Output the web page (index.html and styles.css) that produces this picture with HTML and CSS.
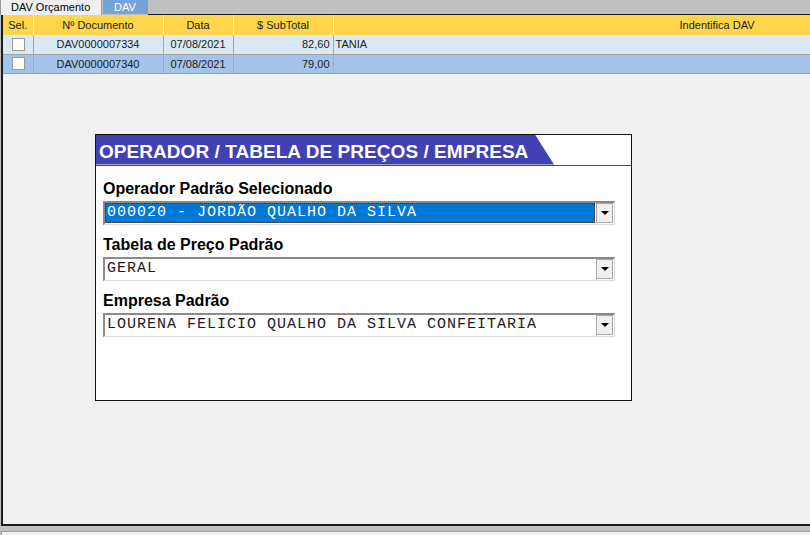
FILE: index.html
```html
<!DOCTYPE html>
<html lang="pt-BR">
<head>
<meta charset="utf-8">
<title>DAV</title>
<link rel="stylesheet" href="styles.css">
</head>
<body>
<div class="tabbar">
  <div class="tab tab-active">DAV Orçamento</div>
  <div class="tab tab-blue">DAV</div>
  <div class="tab-fill"></div>
</div>
<div class="panel">
  <div class="grid-wrap">
    <table class="grid">
      <colgroup>
        <col class="c-sel"><col class="c-doc"><col class="c-data"><col class="c-sub"><col class="c-id">
      </colgroup>
      <thead>
        <tr>
          <th>Sel.</th>
          <th>Nº Documento</th>
          <th>Data</th>
          <th>$ SubTotal</th>
          <th>Indentifica DAV</th>
        </tr>
      </thead>
      <tbody>
        <tr class="row-a">
          <td class="center"><span class="check"></span></td>
          <td class="center">DAV0000007334</td>
          <td class="center">07/08/2021</td>
          <td class="right">82,60</td>
          <td>TANIA</td>
        </tr>
        <tr class="row-b">
          <td class="center"><span class="check"></span></td>
          <td class="center">DAV0000007340</td>
          <td class="center">07/08/2021</td>
          <td class="right">79,00</td>
          <td></td>
        </tr>
      </tbody>
    </table>
  </div>

  <div class="dialog">
    <div class="dlg-head">
      <div class="dlg-title">OPERADOR / TABELA DE PREÇOS / EMPRESA</div>
    </div>
    <div class="dlg-body">
      <div class="field">
        <div class="label">Operador Padrão Selecionado</div>
        <div class="select">
          <div class="sel-value selected"><span>000020 - JORDÃO QUALHO DA SILVA</span></div>
          <div class="sel-btn"><span class="arrow"></span></div>
        </div>
      </div>
      <div class="field">
        <div class="label">Tabela de Preço Padrão</div>
        <div class="select">
          <div class="sel-value"><span>GERAL</span></div>
          <div class="sel-btn"><span class="arrow"></span></div>
        </div>
      </div>
      <div class="field">
        <div class="label">Empresa Padrão</div>
        <div class="select">
          <div class="sel-value"><span>LOURENA FELICIO QUALHO DA SILVA CONFEITARIA</span></div>
          <div class="sel-btn"><span class="arrow"></span></div>
        </div>
      </div>
    </div>
  </div>
</div>
<div class="footer"><div class="footer-inner"></div></div>
</body>
</html>
```

FILE: styles.css
```css
* { box-sizing: border-box; }
html, body {
  margin: 0;
  padding: 0;
  width: 810px;
  height: 535px;
  overflow: hidden;
  background: #c0c0c0;
  font-family: "Liberation Sans", Arial, sans-serif;
}

.tabbar {
  display: flex;
  height: 15px;
  background: #c0c0c0;
}
.tab {
  font-size: 11px;
  line-height: 14px;
  height: 15px;
  padding: 0 0 0 10px;
}
.tab-active {
  width: 102px;
  background: #f0f0f0;
  border-left: 1px solid #9a9a9a;
  border-right: 1px solid #9a9a9a;
  color: #000;
}
.tab-blue {
  width: 45px;
  margin-left: 1px;
  height: 14px;
  background: #76a2d8;
  color: #fff;
  padding-left: 11px;
}
.tab-fill {
  flex: 1;
  border-bottom: 1px solid #1a1a1a;
}

.panel {
  margin-left: 1px;
  height: 511px;
  background: #f0f0f0;
  border-left: 2px solid #1a1a1a;
  border-bottom: 2px solid #1a1a1a;
  display: flex;
  flex-direction: column;
}

.grid-wrap {
  width: 807px;
  overflow: hidden;
}
.grid {
  border-collapse: collapse;
  table-layout: fixed;
  width: 1098px;
  font-size: 11px;
  color: #1a1a1a;
}
.c-sel { width: 30px; }
.c-doc { width: 130px; }
.c-data { width: 70px; }
.c-sub { width: 100px; }
.c-id { width: 768px; }

.grid th {
  height: 20px;
  padding: 0;
  font-weight: normal;
  background: #ffd54c;
  border-right: 1px solid #fff1c0;
  text-align: center;
  white-space: nowrap;
  overflow: hidden;
}
.grid td {
  height: 19px;
  padding: 0 3px;
  border-right: 1px solid #a8a8a8;
  border-bottom: 1px solid #a0a0a0;
  white-space: nowrap;
  overflow: hidden;
}
.grid td:last-child { padding-left: 2px; }
.row-a td { background: #d9e9f6; }
.row-b td { background: #a4c3ea; }
.center { text-align: center; }
.right { text-align: right; }
.check {
  display: inline-block;
  width: 13px;
  height: 13px;
  background: #fff;
  border: 1px solid #9a9a9a;
  vertical-align: middle;
  margin-left: 2px;
}

.dialog {
  margin: 60px 0 0 92px;
  width: 537px;
  height: 267px;
  border: 1px solid #111;
  background: #fff;
}
.dlg-head {
  height: 31px;
  border-bottom: 1px solid #4141b3;
}
.dlg-title {
  width: 458px;
  height: 30px;
  background: #4141b3;
  clip-path: polygon(0 0, 439px 0, 458px 30px, 0 30px);
  color: #fff;
  font-weight: bold;
  font-size: 19px;
  line-height: 30px;
  padding: 2px 0 0 3px;
  white-space: nowrap;
  letter-spacing: 0.05px;
}
.dlg-body {
  padding: 13px 16px 0 7px;
  display: flex;
  flex-direction: column;
  gap: 10px;
}
.field {
  display: flex;
  flex-direction: column;
  gap: 2px;
}
.label {
  font-weight: bold;
  font-size: 16px;
  line-height: 20px;
  color: #000;
}
.select {
  display: flex;
  height: 24px;
  width: 512px;
  background: #fff;
  border-top: 2px solid #8a8a8a;
  border-left: 2px solid #8a8a8a;
  border-bottom: 1px solid #dcdcdc;
  border-right: 1px solid #dcdcdc;
  padding: 0 1px 1px 0;
}
.sel-value {
  flex: 1;
  display: flex;
  align-items: center;
  padding-left: 2px;
  font-family: "Liberation Mono", "Courier New", monospace;
  font-size: 15px;
  letter-spacing: 1px;
  color: #1a1a1a;
  white-space: nowrap;
}
.sel-value.selected {
  background: #0078d7;
  color: #fff;
  outline: 1px dotted #333;
  outline-offset: -1px;
}
.sel-btn {
  width: 17px;
  background: #f0f0f0;
  border: 1px solid #a8a8a8;
  display: flex;
  align-items: center;
  justify-content: center;
  margin: 0 0 0 1px;
}
.arrow {
  width: 0;
  height: 0;
  border-left: 4px solid transparent;
  border-right: 4px solid transparent;
  border-top: 4px solid #000;
}

.footer {
  height: 9px;
  padding-top: 5px;
  padding-left: 1px;
}
.footer-inner {
  height: 4px;
  background: #f0f0f0;
  border-top: 1px solid #a0a0a0;
  border-left: 1px solid #a0a0a0;
}
```
